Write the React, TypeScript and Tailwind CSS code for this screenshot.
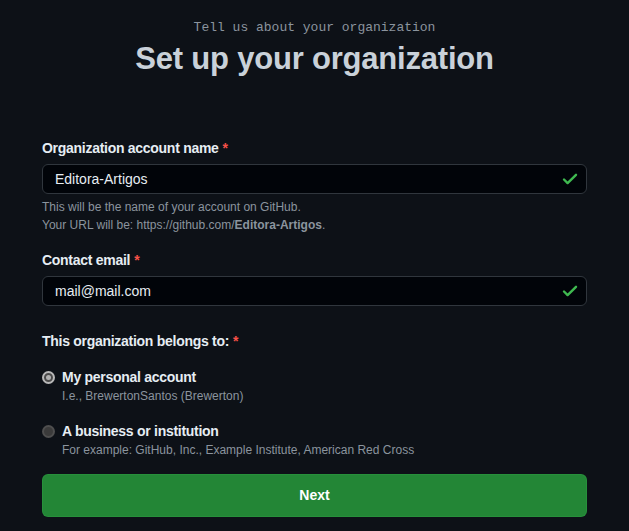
import React, { useState } from 'react';

const sans = 'font-["Liberation_Sans",Arial,sans-serif]';

const Check: React.FC = () => (
  <svg width="18" height="18" viewBox="0 0 18 18" fill="none" className="shrink-0">
    <path d="M3 9.5l3.6 3.6L15 4.8" stroke="#3fb950" strokeWidth="2.4" strokeLinecap="round" strokeLinejoin="round" />
  </svg>
);

const Required: React.FC = () => <span className="ml-1 text-[#f85149]">*</span>;

const Radio: React.FC<{ checked: boolean; onClick: () => void }> = ({ checked, onClick }) => (
  <button
    type="button"
    onClick={onClick}
    className={`mt-[4px] flex h-[13px] w-[13px] shrink-0 items-center justify-center rounded-full border-2 ${
      checked ? 'border-[#b8b8b8] bg-[#4a4a4a]' : 'border-[#4f4f4f] bg-[#3b3b3b]'
    }`}
  >
    {checked && <span className="h-[5px] w-[5px] rounded-full bg-[#b0b0b0]" />}
  </button>
);

const App: React.FC = () => {
  const [owner, setOwner] = useState<'personal' | 'business'>('personal');

  return (
    <div className={`min-h-screen bg-[#0d1117] px-[42px] pb-[14px] ${sans}`}>
      {/* Header */}
      <p className='pt-[18px] text-center font-["Liberation_Mono",monospace] text-[13px] leading-5 text-[#8b949e]'>
        Tell us about your organization
      </p>
      <h1 className="text-center text-[31px] font-semibold leading-[42px] tracking-[-0.2px] text-[#c9d1d9]">
        Set up your organization
      </h1>

      {/* Form */}
      <div className="mt-[58px]">
        <label className="block text-[14px] font-bold leading-5 tracking-[-0.28px] text-[#e6edf3]">
          Organization account name
          <Required />
        </label>
        <div className="mt-[6px] flex h-[30px] items-center rounded-md border border-[#30363d] bg-[#010409] pl-[12px] pr-[7px]">
          <span className="flex-1 text-[14px] text-[#e6edf3]">Editora-Artigos</span>
          <Check />
        </div>
        <p className="mt-[4px] text-[12px] leading-[18px] text-[#8b949e]">
          This will be the name of your account on GitHub.
          <br />
          Your URL will be: https://github.com/<strong className="font-bold">Editora-Artigos</strong>.
        </p>

        <label className="mt-[16px] block text-[14px] font-bold leading-5 tracking-[-0.28px] text-[#e6edf3]">
          Contact email
          <Required />
        </label>
        <div className="mt-[6px] flex h-[30px] items-center rounded-md border border-[#30363d] bg-[#010409] pl-[12px] pr-[7px]">
          <span className="flex-1 text-[14px] text-[#e6edf3]">mail@mail.com</span>
          <Check />
        </div>

        <p className="mt-[25px] text-[14px] font-bold leading-5 tracking-[-0.28px] text-[#e6edf3]">
          This organization belongs to:
          <Required />
        </p>

        <div className="mt-[16px] flex gap-[7px]">
          <Radio checked={owner === 'personal'} onClick={() => setOwner('personal')} />
          <div>
            <p className="text-[14px] font-bold leading-5 tracking-[-0.28px] text-[#e6edf3]">My personal account</p>
            <p className="text-[12px] leading-[18px] text-[#8b949e]">I.e., BrewertonSantos (Brewerton)</p>
          </div>
        </div>

        <div className="mt-[16px] flex gap-[7px]">
          <Radio checked={owner === 'business'} onClick={() => setOwner('business')} />
          <div>
            <p className="text-[14px] font-bold leading-5 tracking-[-0.28px] text-[#e6edf3]">A business or institution</p>
            <p className="text-[12px] leading-[18px] text-[#8b949e]">
              For example: GitHub, Inc., Example Institute, American Red Cross
            </p>
          </div>
        </div>

        <button
          type="button"
          className="mt-[15px] flex h-[43px] w-full items-center justify-center rounded-md border border-[#2ea043]/40 bg-[#238636] text-[14px] font-bold text-white"
        >
          Next
        </button>
      </div>
    </div>
  );
};

export default App;
